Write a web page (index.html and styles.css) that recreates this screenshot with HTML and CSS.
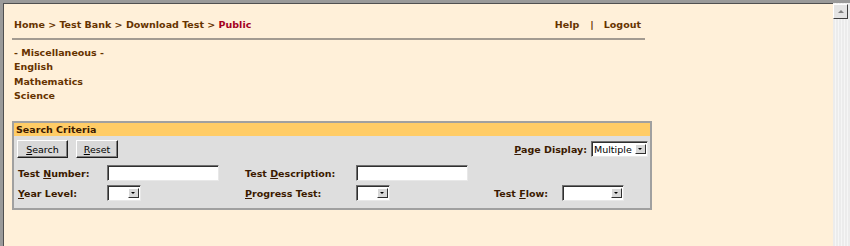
FILE: index.html
```html
<!DOCTYPE html>
<html lang="en">

<head>
    <meta charset="UTF-8" />
    <title>Download Test - Public</title>
    <link rel="stylesheet" href="styles.css">
</head>

<body>
    <div class="window">
        <div class="page">
            <div class="topbar">
                <div class="crumbs">
                    <a href="#">Home</a> &gt; <a href="#">Test Bank</a> &gt; <a href="#">Download Test</a> &gt;
                    <span class="current">Public</span>
                </div>
                <div class="tools">
                    <a href="#">Help</a><span class="sep">|</span><a href="#">Logout</a>
                </div>
            </div>

            <ul class="subjects">
                <li><a href="#">- Miscellaneous -</a></li>
                <li><a href="#">English</a></li>
                <li><a href="#">Mathematics</a></li>
                <li><a href="#">Science</a></li>
            </ul>

            <div class="search">
                <div class="search-head">Search Criteria</div>
                <div class="search-body">
                    <div class="actions">
                        <button class="btn btn--search"><u>S</u>earch</button>
                        <button class="btn btn--reset"><u>R</u>eset</button>
                        <label class="page-display">
                            <span><u>P</u>age Display:</span>
                            <span class="combo combo--page"><select><option>Multiple</option></select></span>
                        </label>
                    </div>
                    <div class="fields">
                        <label>Test <u>N</u>umber:</label>
                        <input type="text" class="txt">
                        <label>Test <u>D</u>escription:</label>
                        <input type="text" class="txt">
                        <span></span>
                        <span></span>

                        <label><u>Y</u>ear Level:</label>
                        <span class="combo combo--small"><select><option></option></select></span>
                        <label><u>P</u>rogress Test:</label>
                        <span class="combo combo--small"><select><option></option></select></span>
                        <label>Test <u>F</u>low:</label>
                        <span class="combo combo--flow"><select><option></option></select></span>
                    </div>
                </div>
            </div>
        </div>

        <div class="scrollbar">
            <div class="scroll-up"></div>
            <div class="scroll-track"></div>
        </div>
    </div>
</body>

</html>
```

FILE: styles.css
```css
html,
body {
    margin: 0;
    padding: 0;
    height: 100%;
}

body {
    font-family: "DejaVu Sans", Verdana, sans-serif;
    font-size: 9.5px;
    font-weight: bold;
    color: #663300;
    background-color: #fff0d9;
}

a {
    color: #663300;
    text-decoration: none;
}

.window {
    display: flex;
    height: 100%;
    box-sizing: border-box;
    border-top: 3px solid #9a9a9a;
    border-left: 3px solid #9a9a9a;
    box-shadow: inset 1px 1px 0 #505050;
}

.page {
    flex: 1;
    padding: 0 0 0 9px;
}

/* breadcrumb + help/logout row */
.topbar {
    width: 631px;
    display: flex;
    justify-content: space-between;
    padding: 16px 0 8px 2px;
    border-bottom: 2px solid #a39b91;
    line-height: 11px;
}

.crumbs .current {
    color: #a3001e;
}

.tools {
    padding-right: 4px;
}

.tools .sep {
    margin: 0 10px 0 11px;
}

.subjects {
    list-style: none;
    margin: 0;
    padding: 6px 0 0 2px;
    line-height: 14.3px;
}

/* search criteria panel */
.search {
    width: 636px;
    margin-top: 18px;
    border: 2px solid #a0a0a0;
    background-color: #dedede;
}

.search-head {
    background-color: #ffcc66;
    color: #3b1a00;
    padding: 1px 2px 0;
    line-height: 12px;
}

.search-body {
    padding: 4px 2px 7px 3px;
}

.actions {
    display: flex;
    align-items: center;
    gap: 8px;
}

.btn {
    font: inherit;
    font-weight: normal;
    color: #000;
    height: 18px;
    padding: 0 4px;
    background-color: #d8d8d8;
    border: 1px solid;
    border-color: #ffffff #202020 #202020 #ffffff;
    box-shadow: inset -1px -1px 0 #808080;
}

.btn--search {
    width: 51px;
}

.btn--reset {
    width: 42px;
}

.page-display {
    margin-left: auto;
    display: flex;
    align-items: center;
    gap: 4px;
    color: #3b1a00;
}

.fields {
    display: grid;
    grid-template-columns: 89px 138px 111px 138px 68px auto;
    align-items: center;
    row-gap: 4px;
    margin-top: 7px;
    padding-left: 1px;
    color: #3b1a00;
}

.txt {
    width: 112px;
    height: 16px;
    box-sizing: border-box;
    margin: 0;
    background: #fff;
    border: 1px solid;
    border-color: #707070 #e8e8e8 #e8e8e8 #707070;
    box-shadow: inset 1px 1px 0 #303030;
}

/* fake windows-style combo box */
.combo {
    position: relative;
    display: inline-block;
    height: 16px;
    box-sizing: border-box;
    background: #fff;
    border: 1px solid;
    border-color: #707070 #e8e8e8 #e8e8e8 #707070;
    box-shadow: inset 1px 1px 0 #303030;
}

.combo select {
    appearance: none;
    -webkit-appearance: none;
    border: none;
    background: transparent;
    font-family: "DejaVu Sans", Verdana, sans-serif;
    font-size: 9.5px;
    font-weight: normal;
    color: #000;
    height: 14px;
    padding: 0 0 0 2px;
    width: 100%;
    outline: none;
}

.combo::after {
    content: "";
    position: absolute;
    top: 2px;
    right: 1px;
    width: 11px;
    height: 10px;
    background-color: #d8d8d8;
    border: 1px solid;
    border-color: #ffffff #303030 #303030 #ffffff;
    box-sizing: border-box;
}

.combo::before {
    content: "";
    position: absolute;
    z-index: 1;
    top: 6px;
    right: 5px;
    border-left: 2px solid transparent;
    border-right: 2px solid transparent;
    border-top: 2px solid #000;
}

.combo--page {
    width: 57px;
}

.combo--small {
    width: 34px;
}

.combo--flow {
    width: 62px;
}

/* fake scrollbar on the right */
.scrollbar {
    width: 17px;
    display: flex;
    flex-direction: column;
    background: repeating-linear-gradient(90deg, #ececec 0 2px, #f6f6f6 2px 3px);
}

.scroll-up {
    position: relative;
    height: 15px;
    margin: 1px 2px 0 0;
    box-sizing: border-box;
    background-color: #e4e4e4;
    border: 1px solid;
    border-color: #ffffff #404040 #404040 #ffffff;
}

.scroll-up::after {
    content: "";
    position: absolute;
    top: 5px;
    left: 4px;
    border-left: 3px solid transparent;
    border-right: 3px solid transparent;
    border-bottom: 3px solid #808080;
}

.scroll-track {
    flex: 1;
}
```
